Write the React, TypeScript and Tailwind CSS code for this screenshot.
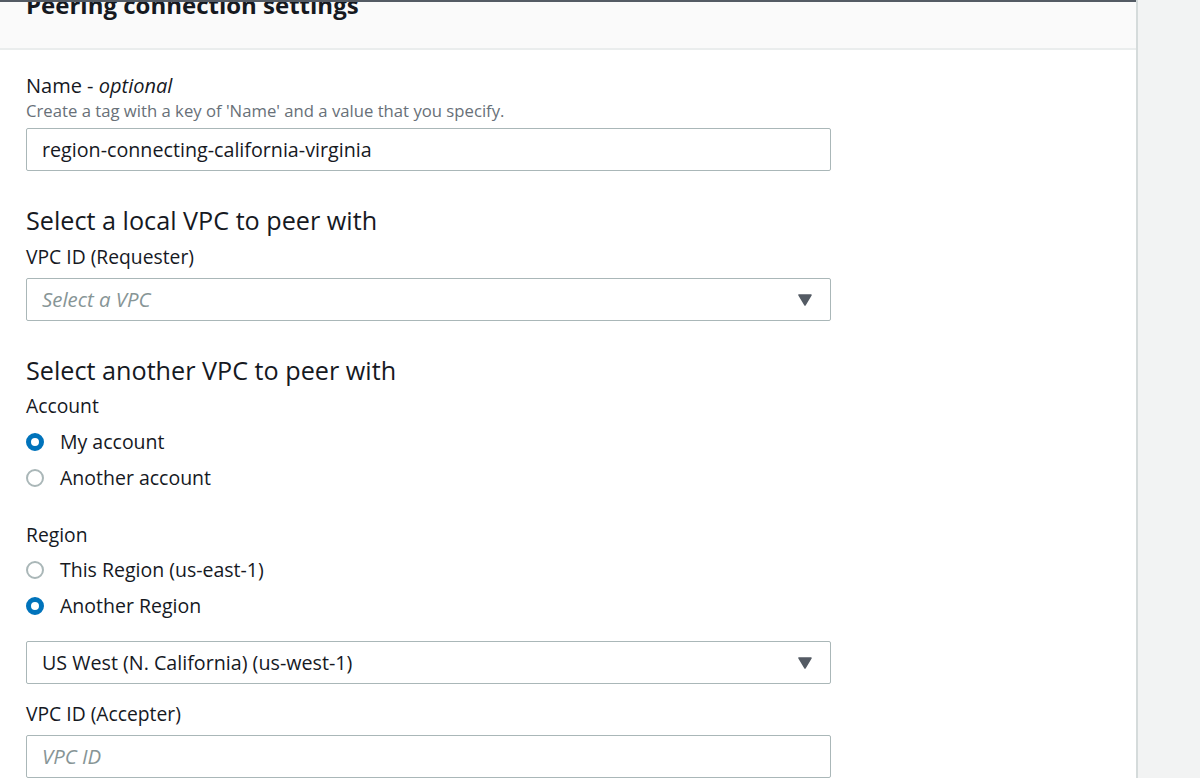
const font = { fontFamily: '"Open Sans", "Noto Sans", sans-serif' };

function Radio({ checked, label }: { checked?: boolean; label: string }) {
  return (
    <label className="flex items-center gap-4 h-[36px]">
      {checked ? (
        <span className="w-[18px] h-[18px] rounded-full border-[5px] border-[#0073bb] bg-white shrink-0" />
      ) : (
        <span className="w-[18px] h-[18px] rounded-full border-2 border-[#aab7b8] bg-white shrink-0" />
      )}
      <span className="text-[19.5px] text-[#16191f]">{label}</span>
    </label>
  );
}

function Caret() {
  return (
    <svg width="14" height="12" viewBox="0 0 14 12" className="shrink-0">
      <path d="M1 1 H13 L7 11 Z" fill="#545b64" stroke="#545b64" strokeLinejoin="round" strokeWidth="1.5" />
    </svg>
  );
}

function Field({ value, placeholder, select }: { value?: string; placeholder?: string; select?: boolean }) {
  return (
    <div className="w-[805px] h-[43px] border border-[#aab7b8] rounded-[2px] bg-white flex items-center justify-between pl-[15px] pr-[18px]">
      {value ? (
        <span className="text-[19.7px] text-[#16191f]">{value}</span>
      ) : (
        <span className="text-[20.4px] italic text-[#879596]">{placeholder}</span>
      )}
      {select && <Caret />}
    </div>
  );
}

export default function App() {
  return (
    <div className="w-[1200px] h-[778px] overflow-hidden bg-[#f2f3f3] flex" style={font}>
      <div className="w-[1138px] h-full bg-white border-r-2 border-[#d5dbdb] flex flex-col">
        <div className="h-[2px] bg-[#545b64]" />
        <div className="h-[48px] bg-[#fafafa] border-b-2 border-[#eaeded] overflow-hidden">
          <h2 className="text-[24px] font-bold text-[#16191f] leading-none pl-[26px] -mt-[9px]">
            Peering connection settings
          </h2>
        </div>

        <div className="pl-[26px] pt-[24px] flex flex-col">
          <div className="text-[20px] text-[#16191f] leading-[24px]">
            Name - <span className="italic">optional</span>
          </div>
          <div className="text-[16.7px] text-[#687078] leading-[24px] mt-[1px]">
            Create a tag with a key of 'Name' and a value that you specify.
          </div>
          <div className="mt-[5px]">
            <Field value="region-connecting-california-virginia" />
          </div>

          <h3 className="text-[25.2px] text-[#16191f] leading-[32px] mt-[33px]">Select a local VPC to peer with</h3>
          <div className="text-[19.3px] text-[#16191f] leading-[24px] mt-[9px]">VPC ID (Requester)</div>
          <div className="mt-[9px]">
            <Field placeholder="Select a VPC" select />
          </div>

          <h3 className="text-[25.2px] text-[#16191f] leading-[32px] mt-[33px]">Select another VPC to peer with</h3>
          <div className="text-[19.3px] text-[#16191f] leading-[24px] mt-[8px]">Account</div>
          <div className="mt-[6px] flex flex-col">
            <Radio checked label="My account" />
            <Radio label="Another account" />
          </div>

          <div className="text-[19.3px] text-[#16191f] leading-[24px] mt-[27px]">Region</div>
          <div className="mt-[5px] flex flex-col">
            <Radio label="This Region (us-east-1)" />
            <Radio checked label="Another Region" />
          </div>
          <div className="mt-[17px]">
            <Field value="US West (N. California) (us-west-1)" select />
          </div>

          <div className="text-[19.3px] text-[#16191f] leading-[24px] mt-[18px]">VPC ID (Accepter)</div>
          <div className="mt-[9px]">
            <Field placeholder="VPC ID" />
          </div>
        </div>
      </div>
    </div>
  );
}
